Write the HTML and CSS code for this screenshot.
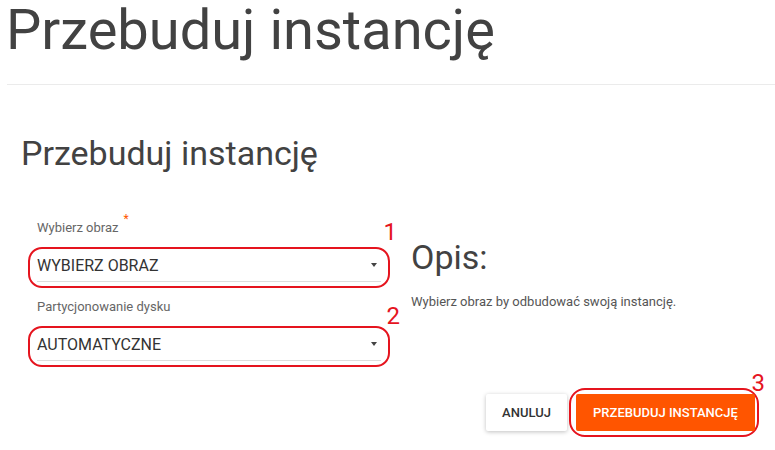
FILE: index.html
```html
<!DOCTYPE html>
<html lang="pl">
<head>
  <meta charset="UTF-8">
  <meta name="viewport" content="width=device-width, initial-scale=1.0">
  <title>Przebuduj instancję</title>
  <link rel="stylesheet" href="styles.css">
</head>
<body>
  <h1 class="page-title">Przebuduj instancję</h1>
  <hr class="page-line">

  <div class="dialog">
    <h2 class="dialog-title">Przebuduj instancję</h2>

    <div class="dialog-body">
      <div class="form-col">
        <label class="field-label">Wybierz obraz<span class="req">*</span></label>
        <div class="mark mark-select">
          <div class="select">
            <span>WYBIERZ OBRAZ</span>
            <span class="caret"></span>
          </div>
          <span class="mark-num">1</span>
        </div>

        <label class="field-label field-label-2">Partycjonowanie dysku</label>
        <div class="mark mark-select mark-select-2">
          <div class="select">
            <span>AUTOMATYCZNE</span>
            <span class="caret"></span>
          </div>
          <span class="mark-num">2</span>
        </div>
      </div>

      <div class="desc-col">
        <h2 class="desc-title">Opis:</h2>
        <p class="desc-text">Wybierz obraz by odbudować swoją instancję.</p>
      </div>
    </div>

    <div class="actions">
      <button class="btn btn-cancel">Anuluj</button>
      <div class="mark mark-btn">
        <button class="btn btn-primary">Przebuduj instancję</button>
        <span class="mark-num">3</span>
      </div>
    </div>
  </div>
</body>
</html>
```

FILE: styles.css
```css
body {
  margin: 0;
  font-family: Roboto, "Liberation Sans", sans-serif;
  color: #424242;
  background: #FFFFFF;
}

.page-title {
  margin: 0;
  padding-left: 6px;
  font-size: 56px;
  font-weight: 400;
  line-height: 1.1;
  color: #424242;
}

.page-line {
  margin: 22px 0 0 7px;
  border: 0;
  border-top: 1px solid #EBEBEB;
}

.dialog {
  padding-left: 21px;
}

.dialog-title {
  margin: 0;
  padding-top: 48px;
  font-size: 34px;
  font-weight: 400;
  line-height: 40px;
  color: #424242;
}

.dialog-body {
  display: flex;
  margin-top: 47px;
}

.form-col {
  width: 362px;
  margin-left: 7px;
}

.field-label {
  display: block;
  position: relative;
  padding-left: 9px;
  font-size: 13px;
  line-height: 16px;
  color: #666666;
  margin-bottom: 11px;
}

.field-label-2 {
  margin-top: 11px;
}

.req {
  position: absolute;
  top: -9px;
  margin-left: 5px;
  color: #FF5500;
  font-size: 12px;
}

/* czerwone ramki z numerami */
.mark {
  position: relative;
  border: 2px solid #E5141E;
  border-radius: 14px;
}

.mark-num {
  position: absolute;
  color: #E5141E;
  font-size: 24px;
  line-height: 24px;
}

.mark-select {
  height: 37px;
  padding-left: 7px;
  padding-right: 7px;
}

.mark-select .mark-num {
  right: -9px;
  top: -29px;
}

.mark-select-2 .mark-num {
  right: -12px;
  top: -24px;
}

.select {
  display: flex;
  align-items: center;
  justify-content: space-between;
  height: 31px;
  margin-top: 1px;
  padding-right: 4px;
  border-bottom: 1px solid #DDDDDD;
  font-size: 16px;
  color: #333333;
}

.caret {
  width: 0;
  height: 0;
  border-left: 3px solid transparent;
  border-right: 3px solid transparent;
  border-top: 4px solid #444444;
}

.desc-col {
  margin-left: 21px;
  padding-top: 17px;
}

.desc-title {
  margin: 0;
  font-size: 34px;
  font-weight: 400;
  line-height: 40px;
  color: #424242;
}

.desc-text {
  margin: 17px 0 0;
  font-size: 13px;
  color: #555555;
}

.actions {
  display: flex;
  justify-content: flex-end;
  align-items: center;
  gap: 2px;
  margin-top: 21px;
  padding-right: 16px;
}

.btn {
  height: 37px;
  border: 0;
  border-radius: 2px;
  font-family: Roboto, "Liberation Sans", sans-serif;
  font-size: 13px;
  font-weight: 500;
  text-transform: uppercase;
  cursor: pointer;
}

.btn-cancel {
  width: 81px;
  background: #FFFFFF;
  color: #333333;
  box-shadow: 0 1px 4px rgba(0, 0, 0, 0.25);
}

.mark-btn {
  padding: 4px 2px 4px 5px;
  border-radius: 16px;
}

.mark-btn .mark-num {
  right: -8px;
  top: -19px;
}

.btn-primary {
  display: block;
  width: 179px;
  background: #FF5500;
  color: #FFFFFF;
}
```
